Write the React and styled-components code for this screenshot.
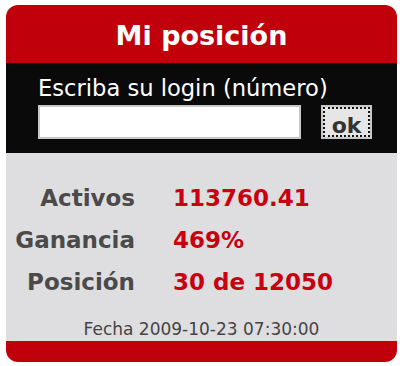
import React from 'react';
import styled, { createGlobalStyle } from 'styled-components';

const GlobalStyle = createGlobalStyle`
  body {
    margin: 0;
    background: #ffffff;
    font-family: "DejaVu Sans", Verdana, sans-serif;
  }
`;

const Card = styled.div`
  width: 391px;
  margin: 5px 0 0 6px;
  border-radius: 12px;
  overflow: hidden;
  display: flex;
  flex-direction: column;
`;

const Header = styled.div`
  height: 58px;
  background: #c0000a;
  color: #ffffff;
  font-weight: 700;
  font-size: 27px;
  display: flex;
  align-items: center;
  justify-content: center;
  padding-top: 2px;
  box-sizing: border-box;
`;

const LoginBox = styled.div`
  height: 90px;
  background: #0a0a0a;
  padding: 13px 0 0 32px;
  box-sizing: border-box;
`;

const Prompt = styled.div`
  color: #ffffff;
  font-size: 22.6px;
  line-height: 25px;
`;

const InputRow = styled.div`
  display: flex;
  gap: 20px;
  margin-top: 4px;
`;

const LoginInput = styled.input`
  width: 263px;
  height: 34px;
  box-sizing: border-box;
  border: 2px solid #c8c8c8;
  background: #ffffff;
  padding: 0 4px;
  outline: none;
`;

const OkButton = styled.button`
  width: 51px;
  height: 34px;
  box-sizing: border-box;
  background: #e6e6e6;
  border: 2px solid #c8c8c8;
  outline: 2px dotted #111;
  outline-offset: -4px;
  font-family: "DejaVu Sans", Verdana, sans-serif;
  font-weight: 700;
  font-size: 22px;
  color: #333;
  padding: 6px 0 0;
  line-height: 26px;
`;

const Stats = styled.div`
  background: #dedee0;
  height: 188px;
  box-sizing: border-box;
  padding-top: 24px;
  display: flex;
  flex-direction: column;
`;

const Grid = styled.div`
  display: grid;
  grid-template-columns: 129px 1fr;
  column-gap: 38px;
  grid-auto-rows: 42px;
  align-items: center;
  font-weight: 700;
  font-size: 23px;
`;

const Label = styled.div`
  text-align: right;
  color: #4a4a4a;
`;

const Value = styled.div`
  color: #c8000f;
`;

const DateLine = styled.div`
  margin-top: 16px;
  text-align: center;
  font-size: 17px;
  color: #444;
`;

const Footer = styled.div`
  height: 21px;
  background: #c0000a;
`;

const rows = [
  ['Activos', '113760.41'],
  ['Ganancia', '469%'],
  ['Posición', '30 de 12050'],
];

export default function App() {
  return (
    <>
      <GlobalStyle />
      <Card>
        <Header>Mi posición</Header>
        <LoginBox>
          <Prompt>Escriba su login (número)</Prompt>
          <InputRow>
            <LoginInput type="text" />
            <OkButton>ok</OkButton>
          </InputRow>
        </LoginBox>
        <Stats>
          <Grid>
            {rows.map(([k, v]) => (
              <React.Fragment key={k}>
                <Label>{k}</Label>
                <Value>{v}</Value>
              </React.Fragment>
            ))}
          </Grid>
          <DateLine>Fecha 2009-10-23 07:30:00</DateLine>
        </Stats>
        <Footer />
      </Card>
    </>
  );
}
